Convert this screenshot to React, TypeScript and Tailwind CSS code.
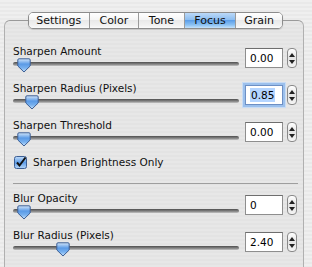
const font = "font-['DejaVu_Sans',sans-serif]";

const tabs = [
  { name: "Settings", w: "w-[60px]" },
  { name: "Color", w: "w-[50px]" },
  { name: "Tone", w: "w-[46px]" },
  { name: "Focus", w: "w-[52px]" },
  { name: "Grain", w: "w-[47px]" },
];

function Thumb() {
  return (
    <svg width="14" height="15" viewBox="0 0 14 15">
      <defs>
        <linearGradient id="thumbFill" x1="0" y1="0" x2="0" y2="1">
          <stop offset="0" stopColor="#d4e7fb" />
          <stop offset="0.4" stopColor="#5a9ae6" />
          <stop offset="0.7" stopColor="#78b1ef" />
          <stop offset="1" stopColor="#cbe4fb" />
        </linearGradient>
      </defs>
      <path
        d="M2 0.8 H12 Q13.2 0.8 13.2 2 V8 L7 14 L0.8 8 V2 Q0.8 0.8 2 0.8 Z"
        fill="url(#thumbFill)"
        stroke="#3d5f94"
        strokeWidth="1"
      />
    </svg>
  );
}

function Stepper() {
  return (
    <div className="flex h-[20px] w-[10px] flex-col items-center justify-center gap-[3px] rounded-[4px] border border-[#8a8a8a] bg-[linear-gradient(180deg,#ffffff,#e4e4e4_50%,#f4f4f4)]">
      <svg width="6" height="4" viewBox="0 0 6 4">
        <path d="M3 0 L6 4 H0 Z" fill="#222" />
      </svg>
      <svg width="6" height="4" viewBox="0 0 6 4">
        <path d="M0 0 H6 L3 4 Z" fill="#222" />
      </svg>
    </div>
  );
}

function Row({
  label,
  value,
  thumb,
  focused = false,
}: {
  label: string;
  value: string;
  thumb: string;
  focused?: boolean;
}) {
  return (
    <div className="flex h-[37px]">
      <div className="flex w-[226px] flex-col">
        <div className="h-[13px] text-[10.5px] leading-[13px] text-[#111]">{label}</div>
        <div className="relative mt-[1px] h-[15px]">
          <div className="absolute left-0 right-0 top-[3px] h-[4px] rounded-full bg-[linear-gradient(180deg,#4e4e4e,#8a8a8a_60%,#c4c4c4)]" />
          <div className={`absolute -top-[1px] ${thumb}`}>
            <Thumb />
          </div>
        </div>
      </div>
      <div className="ml-[6px] mt-[3px] flex items-start gap-[4px]">
        <div
          className={`flex h-[20px] w-[38px] items-center border bg-white pl-[4px] text-[10.5px] ${
            focused
              ? "border-[#6d8fc4] shadow-[0_0_0_2px_#9cc0ec,0_0_0_3px_#c8dcf5]"
              : "border-[#8e8e8e] border-t-[#6e6e6e]"
          }`}
        >
          <span className={focused ? "bg-[#b5d5ff] px-[1px] leading-[14px]" : "leading-[14px]"}>{value}</span>
        </div>
        <Stepper />
      </div>
    </div>
  );
}

export default function App() {
  return (
    <div
      className={`h-[267px] w-[312px] overflow-hidden bg-[repeating-linear-gradient(180deg,#efefef_0px,#efefef_2px,#e9e9e9_2px,#e9e9e9_4px)] pt-[12px] ${font}`}
    >
      <div className="relative z-10 ml-[28px] flex h-[17px] w-[255px] overflow-hidden rounded-[5px] border border-[#8c8c8c] shadow-[0_1px_1px_rgba(0,0,0,0.15)]">
        {tabs.map((t, i) => (
          <div
            key={t.name}
            className={`flex ${t.w} items-center justify-center text-[11px] leading-none text-[#111] ${
              i > 0 ? "border-l border-[#9a9a9a]" : ""
            } ${
              t.name === "Focus"
                ? "bg-[linear-gradient(180deg,#bcd9f7,#8cbdf0_45%,#5d9fe9_50%,#8cc2f3_80%,#c6e2fb)]"
                : "bg-[linear-gradient(180deg,#ffffff,#f5f5f5_45%,#e9e9e9_50%,#f2f2f2_85%,#fbfbfb)]"
            }`}
          >
            {t.name}
          </div>
        ))}
      </div>
      <div className="-mt-[9px] ml-[4px] h-[260px] w-[300px] rounded-[6px] border border-[#b0b0b0] border-t-[#9a9a9a] bg-[repeating-linear-gradient(180deg,#e7e7e7_0px,#e7e7e7_2px,#e3e3e3_2px,#e3e3e3_4px)] pl-[8px] pt-[24px]">
        <Row label="Sharpen Amount" value="0.00" thumb="left-[4px]" />
        <Row label="Sharpen Radius (Pixels)" value="0.85" thumb="left-[12px]" focused />
        <Row label="Sharpen Threshold" value="0.00" thumb="left-[4px]" />
        <div className="flex h-[13px] items-center gap-[6px] pl-[1px]">
          <svg width="13" height="13" viewBox="0 0 13 13">
            <defs>
              <linearGradient id="cbFill" x1="0" y1="0" x2="0" y2="1">
                <stop offset="0" stopColor="#c4defa" />
                <stop offset="0.5" stopColor="#5e9de8" />
                <stop offset="1" stopColor="#b6d6f8" />
              </linearGradient>
            </defs>
            <rect x="0.5" y="0.5" width="12" height="12" rx="2" fill="url(#cbFill)" stroke="#3d5f94" />
            <path d="M3 6.5 L5.5 9.5 L11.5 1.5" fill="none" stroke="#111" strokeWidth="2" />
          </svg>
          <span className="text-[10.5px] leading-[13px] text-[#111]">Sharpen Brightness Only</span>
        </div>
        <div className="mt-[14px] h-[1px] w-[285px] bg-[#9e9e9e]" />
        <div className="mt-[8px]">
          <Row label="Blur Opacity" value="0" thumb="left-[4px]" />
          <Row label="Blur Radius (Pixels)" value="2.40" thumb="left-[43px]" />
        </div>
      </div>
    </div>
  );
}
